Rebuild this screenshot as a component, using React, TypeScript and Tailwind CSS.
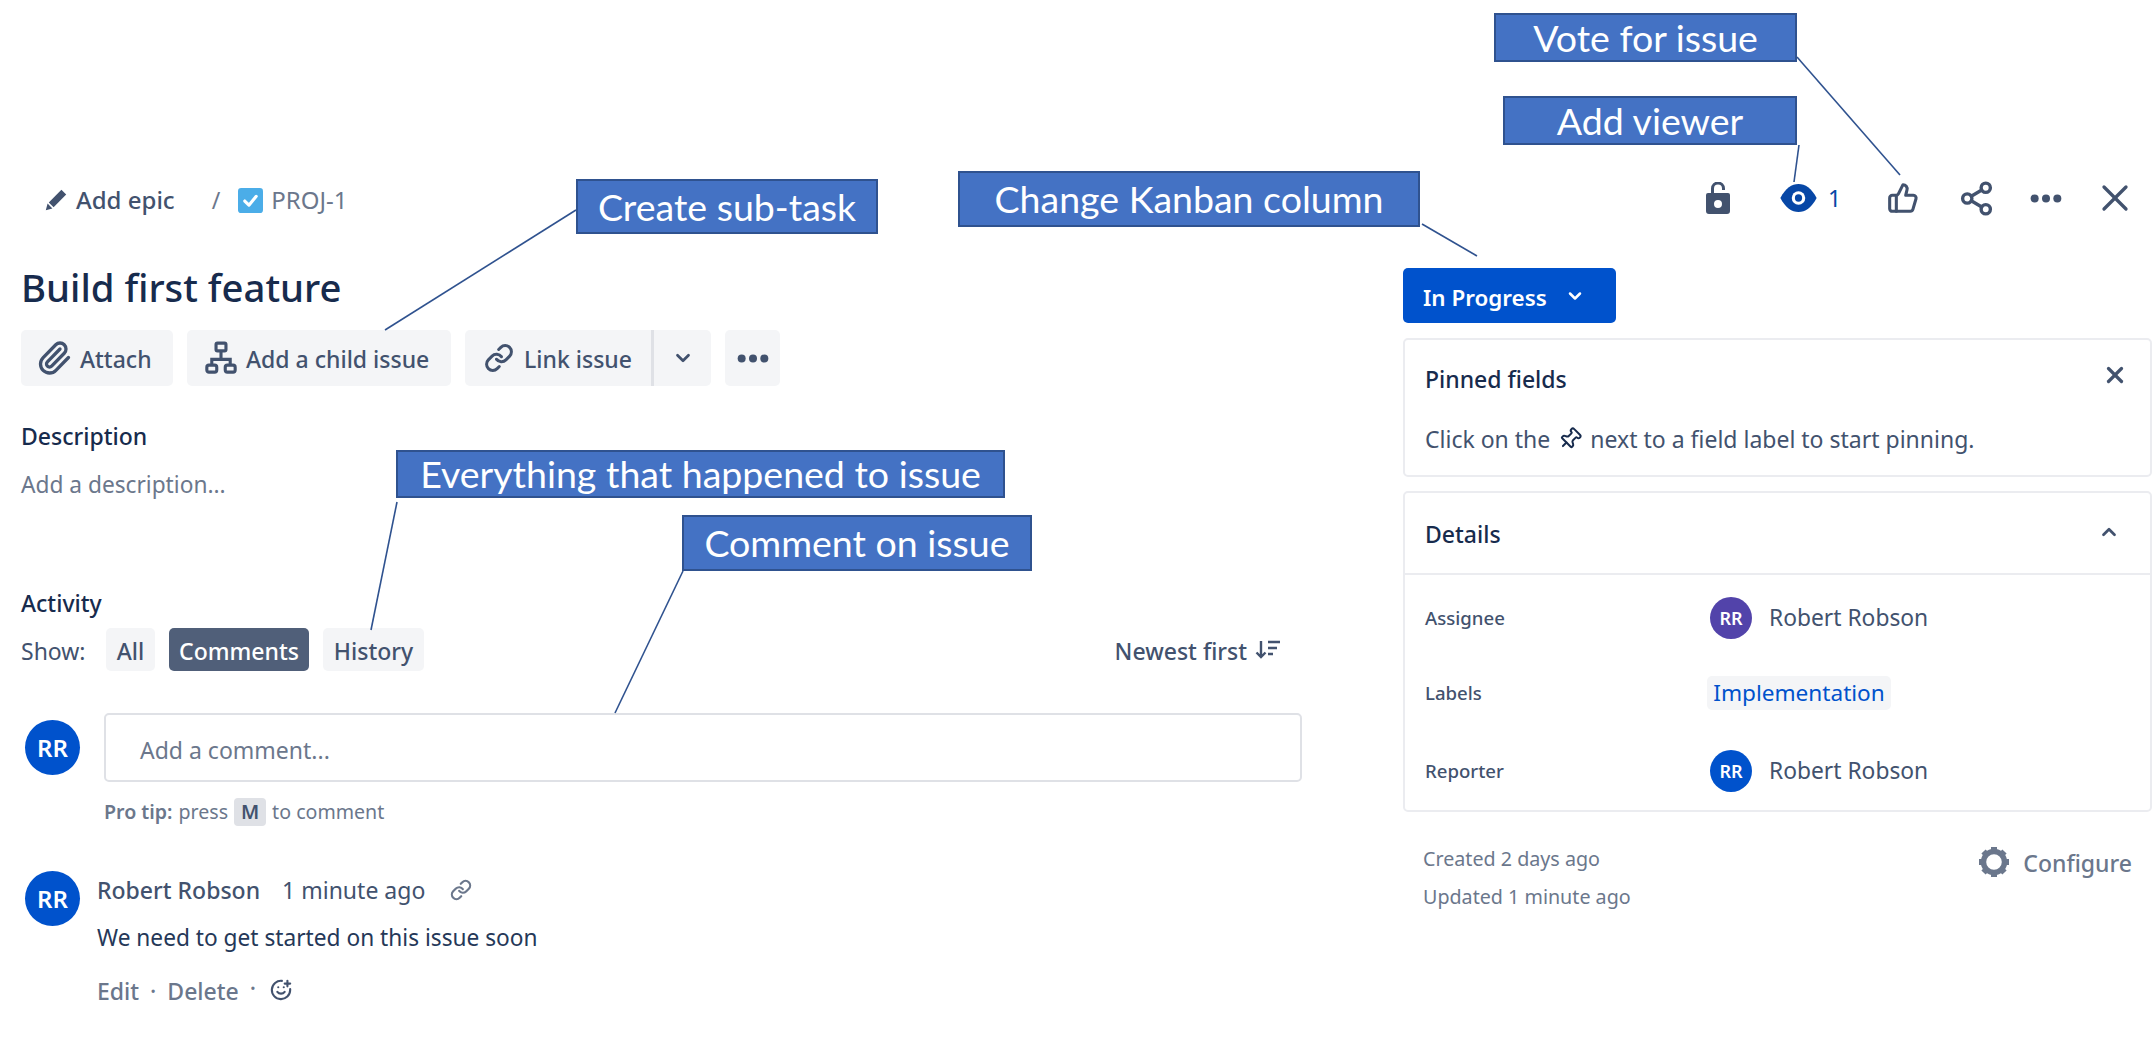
import { ChevronDown, ChevronUp, Link, Paperclip, Pin, Share2, SmilePlus, ThumbsUp, X } from 'lucide-react';

const callouts = [
  { text: 'Vote for issue', box: 'left-[1494px] top-[13px] w-[303px] h-[49px]' },
  { text: 'Add viewer', box: 'left-[1503px] top-[96px] w-[294px] h-[49px]' },
  { text: 'Change Kanban column', box: 'left-[958px] top-[171px] w-[462px] h-[56px]' },
  { text: 'Create sub-task', box: 'left-[576px] top-[179px] w-[302px] h-[55px]' },
  { text: 'Everything that happened to issue', box: 'left-[396px] top-[450px] w-[609px] h-[48px]' },
  { text: 'Comment on issue', box: 'left-[682px] top-[515px] w-[350px] h-[56px]' },
];

const leaders = [
  [1797, 57, 1900, 175],
  [1799, 145, 1794, 182],
  [1422, 224, 1477, 256],
  [576, 210, 385, 330],
  [397, 502, 371, 630],
  [683, 571, 615, 713],
];

function Dots({ className }: { className: string }) {
  return (
    <svg className={className} viewBox="0 0 24 8" fill="currentColor">
      <circle cx="3.5" cy="4" r="3" />
      <circle cx="12" cy="4" r="3" />
      <circle cx="20.5" cy="4" r="3" />
    </svg>
  );
}

function Avatar({ className }: { className: string }) {
  return (
    <div className={`flex shrink-0 items-center justify-center rounded-full font-semibold text-white ${className}`}>
      RR
    </div>
  );
}

function FieldRow({ label, children, className }: { label: string; children: React.ReactNode; className: string }) {
  return (
    <div className={`flex items-center ${className}`}>
      <div className="w-[285px] text-[18.6px] font-medium text-[#42526e]">{label}</div>
      {children}
    </div>
  );
}

export default function App() {
  return (
    <div className="relative flex h-[1055px] w-[2156px] overflow-hidden bg-white font-['Noto_Sans',sans-serif] text-[23px] text-[#172b4d]">
      {/* Left column */}
      <div className="ml-[21px] flex w-[1281px] flex-col">
        <div className="mt-[180px] flex h-[40px] items-center">
          <svg className="ml-[23px] h-[24px] w-[24px] text-[#42526e]" viewBox="0 0 20 20" fill="currentColor">
            <path d="M14.5 1.5l4 4-10.5 10.5-4-4zM3 13l4 4-5.5 1.5z" />
          </svg>
          <span className="ml-[8px] text-[24px] font-medium text-[#42526e]">Add epic</span>
          <span className="ml-[37px] text-[#6b778c]">/</span>
          <svg className="ml-[18px] h-[25px] w-[25px]" viewBox="0 0 24 24">
            <rect width="24" height="24" rx="3" fill="#4bade8" />
            <path d="M6.5 12.5l4 4 7-8.5" fill="none" stroke="#fff" strokeWidth="3" strokeLinecap="round" strokeLinejoin="round" />
          </svg>
          <span className="ml-[8px] text-[24px] text-[#6b778c]">PROJ-1</span>
        </div>

        <h1 className="mt-[44px] flex h-[48px] items-center text-[38.3px] font-medium text-[#172b4d]">Build first feature</h1>

        <div className="mt-[18px] flex h-[56px] gap-[14px] font-medium text-[#42526e]">
          <button className="flex w-[152px] items-center rounded-[5px] bg-[#f4f5f7] pl-[15px]">
            <Paperclip className="h-[36px] w-[36px]" strokeWidth={2.2} />
            <span className="ml-[8px] pt-[3px]">Attach</span>
          </button>
          <button className="flex w-[264px] items-center rounded-[5px] bg-[#f4f5f7] pl-[17px]">
            <svg className="h-[34px] w-[34px]" viewBox="0 0 24 24" fill="none" stroke="currentColor" strokeWidth="2.2">
              <rect x="8.5" y="1.5" width="7" height="5.5" rx="1" />
              <rect x="2" y="17" width="7" height="5" rx="1.5" />
              <rect x="15" y="17" width="7" height="5" rx="1.5" />
              <path d="M12 7v6M5.5 17v-4h13v4" />
            </svg>
            <span className="ml-[8px] pt-[3px]">Add a child issue</span>
          </button>
          <div className="flex w-[246px] overflow-hidden rounded-[5px] bg-[#f4f5f7]">
            <button className="flex w-[189px] items-center border-r-[3px] border-[#dfe1e6] pl-[19px]">
              <Link className="h-[30px] w-[30px]" strokeWidth={2.4} />
              <span className="ml-[10px] pt-[3px]">Link issue</span>
            </button>
            <button className="flex flex-1 items-center justify-center">
              <ChevronDown className="h-[22px] w-[22px]" strokeWidth={3} />
            </button>
          </div>
          <button className="flex w-[55px] items-center justify-center rounded-[5px] bg-[#f4f5f7]">
            <Dots className="h-[11px] w-[32px]" />
          </button>
        </div>

        <div className="mt-[36px] flex h-[28px] items-center font-medium">Description</div>
        <div className="mt-[20px] flex h-[30px] items-center text-[22.7px] text-[#6b778c]">Add a description...</div>

        <div className="mt-[89px] flex h-[28px] items-center font-medium">Activity</div>
        <div className="mt-[11px] flex h-[43px] items-center text-[#42526e]">
          <span className="w-[85px] pt-[4px]">Show:</span>
          <button className="h-full w-[49px] rounded-[5px] bg-[#f4f5f7] pt-[4px] font-medium">All</button>
          <button className="ml-[14px] h-full w-[140px] rounded-[5px] bg-[#505f79] pt-[4px] font-medium text-white">Comments</button>
          <button className="ml-[14px] h-full w-[101px] rounded-[5px] bg-[#f4f5f7] pt-[4px] font-medium">History</button>
          <span className="ml-auto pt-[4px] font-medium">Newest first</span>
          <svg className="ml-[8px] mr-[21px] h-[24px] w-[26px]" viewBox="0 0 26 24" fill="none" stroke="currentColor" strokeWidth="2.4">
            <path d="M6 3v16M1.5 14.5L6 19l4.5-4.5M13 4h12M13 10h9M13 16h5" />
          </svg>
        </div>

        <div className="mt-[42px] flex h-[69px] items-center">
          <Avatar className="ml-[4px] h-[55px] w-[55px] bg-[#0052cc] text-[24px]" />
          <div className="ml-[24px] flex h-full flex-1 items-center rounded-[5px] border-2 border-[#dfe1e6] pl-[34px] pt-[5px] text-[#6b778c]">
            Add a comment...
          </div>
        </div>

        <div className="mt-[15px] flex h-[30px] items-center pl-[83px] text-[19.6px] text-[#6b778c]">
          <span className="font-semibold">Pro tip:</span>
          <span className="ml-[6px]">press</span>
          <span className="ml-[6px] flex h-[28px] w-[32px] items-center justify-center rounded-[4px] bg-[#dfe1e6] font-semibold text-[#42526e]">M</span>
          <span className="ml-[6px]">to comment</span>
        </div>

        <div className="mt-[44px] flex">
          <Avatar className="ml-[4px] h-[55px] w-[55px] bg-[#0052cc] text-[24px]" />
          <div className="ml-[17px] flex flex-col">
            <div className="flex h-[38px] items-center">
              <span className="font-medium text-[#42526e]">Robert Robson</span>
              <span className="ml-[22px] text-[#42526e]">1 minute ago</span>
              <Link className="ml-[25px] h-[22px] w-[22px] text-[#6b778c]" strokeWidth={2.4} />
            </div>
            <div className="mt-[10px] flex h-[38px] items-center text-[22.7px] text-[#253858]">We need to get started on this issue soon</div>
            <div className="mt-[15px] flex h-[38px] items-center font-medium text-[#6b778c]">
              <span>Edit</span>
              <span className="ml-[11px]">·</span>
              <span className="ml-[11px]">Delete</span>
              <span className="ml-[11px] pb-[6px]">·</span>
              <SmilePlus className="ml-[14px] mb-[2px] h-[22px] w-[22px] text-[#42526e]" strokeWidth={2.3} />
            </div>
          </div>
        </div>
      </div>

      {/* Right column */}
      <div className="ml-[101px] flex w-[749px] flex-col">
        <div className="mt-[178px] flex h-[40px] items-center pl-[303px] text-[#42526e]">
          <svg className="h-[32px] w-[24px]" viewBox="0 0 24 32" fill="currentColor">
            <path d="M2 11h20a2 2 0 012 2v16a3 3 0 01-3 3H3a3 3 0 01-3-3V13a2 2 0 012-2zm10 7a4 4 0 100 8 4 4 0 000-8z" fillRule="evenodd" />
            <path d="M6.5 12V6.5a5.5 5.5 0 0111 0V8" fill="none" stroke="currentColor" strokeWidth="3" />
          </svg>
          <svg className="ml-[50px] h-[28px] w-[37px]" viewBox="0 0 35 27">
            <path d="M0 13.5C5 4 11 0 17.5 0S30 4 35 13.5C30 23 24 27 17.5 27S5 23 0 13.5z" fill="#0747a6" />
            <circle cx="17.5" cy="13.5" r="6.5" fill="#fff" />
            <circle cx="17.5" cy="13.5" r="3.5" fill="#0747a6" />
          </svg>
          <span className="ml-[11px] pt-[1px] text-[#0747a6]">1</span>
          <ThumbsUp className="ml-[46px] h-[32px] w-[32px]" strokeWidth={2.3} />
          <Share2 className="ml-[39px] h-[37px] w-[37px]" strokeWidth={2.2} />
          <Dots className="ml-[35px] h-[11px] w-[32px]" />
          <X className="ml-[31px] h-[44px] w-[44px] shrink-0" strokeWidth={1.8} />
        </div>

        <button className="mt-[50px] flex h-[55px] w-[213px] items-center rounded-[5px] bg-[#0052cc] pl-[20px] text-[22.4px] font-semibold text-white">
          <span className="pt-[4px]">In Progress</span>
          <ChevronDown className="ml-[18px] h-[20px] w-[20px]" strokeWidth={3} />
        </button>

        <div className="mt-[15px] flex h-[139px] flex-col rounded-[5px] border-2 border-[#ebecf0] px-[20px]">
          <div className="mt-[22px] flex h-[34px] items-center justify-between font-medium">
            Pinned fields
            <X className="-mt-[8px] mr-[2px] h-[26px] w-[26px] text-[#42526e]" strokeWidth={3} />
          </div>
          <div className="mt-[27px] flex h-[32px] items-center text-[#42526e]">
            Click on the
            <Pin className="ml-[8px] h-[24px] w-[24px] rotate-45 text-[#172b4d]" strokeWidth={2} />
            <span className="ml-[8px]">next to a field label to start pinning.</span>
          </div>
        </div>

        <div className="mt-[14px] flex h-[321px] flex-col rounded-[5px] border-2 border-[#ebecf0]">
          <div className="flex h-[82px] items-center justify-between border-b-2 border-[#ebecf0] pl-[20px] pr-[30px] font-medium">
            <span className="pt-[3px]">Details</span>
            <ChevronUp className="-mt-[2px] h-[22px] w-[22px] text-[#42526e]" strokeWidth={3} />
          </div>
          <FieldRow label="Assignee" className="mt-[22px] h-[42px] pl-[20px]">
            <Avatar className="h-[42px] w-[42px] bg-[#5243aa] text-[18px]" />
            <span className="ml-[17px] text-[22.8px] text-[#42526e]">Robert Robson</span>
          </FieldRow>
          <FieldRow label="Labels" className="mt-[37px] h-[34px] pl-[20px]">
            <span className="-ml-[3px] flex h-[34px] w-[184px] items-center justify-center rounded-[5px] bg-[#f4f5f7] text-[22.6px] text-[#0052cc]">Implementation</span>
          </FieldRow>
          <FieldRow label="Reporter" className="mt-[40px] h-[42px] pl-[20px]">
            <Avatar className="h-[42px] w-[42px] bg-[#0052cc] text-[18px]" />
            <span className="ml-[17px] text-[22.8px] text-[#42526e]">Robert Robson</span>
          </FieldRow>
        </div>

        <div className="mt-[30px] flex justify-between pl-[20px] pr-[20px] text-[#6b778c]">
          <div className="flex flex-col text-[19.7px]">
            <div className="flex h-[34px] items-center">Created 2 days ago</div>
            <div className="mt-[4px] flex h-[34px] items-center">Updated 1 minute ago</div>
          </div>
          <div className="-mt-[3px] flex h-[46px] items-center font-medium">
            <svg className="h-[36px] w-[36px]" viewBox="0 0 24 24" fill="none" stroke="currentColor">
              <circle cx="12" cy="12" r="7" strokeWidth="3.6" />
              <path strokeWidth="4" d="M12 2v3M12 19v3M2 12h3M19 12h3M5 5l2 2M17 17l2 2M19 5l-2 2M7 17l-2 2" />
            </svg>
            <span className="ml-[11px] pt-[3px]">Configure</span>
          </div>
        </div>
      </div>

      {/* Annotation overlay */}
      <svg className="pointer-events-none absolute inset-0 h-[1055px] w-[2156px]" viewBox="0 0 2156 1055">
        {leaders.map(([x1, y1, x2, y2]) => (
          <line key={`${x1}-${y1}`} x1={x1} y1={y1} x2={x2} y2={y2} stroke="#2f528f" strokeWidth="1.6" />
        ))}
      </svg>
      {callouts.map((callout) => (
        <div
          key={callout.text}
          className={`absolute flex items-center justify-center border-2 border-[#2f528f] bg-[#4472c4] pt-[1px] font-['Lato',sans-serif] text-[37.5px] text-white ${callout.box}`}
        >
          {callout.text}
        </div>
      ))}
    </div>
  );
}
